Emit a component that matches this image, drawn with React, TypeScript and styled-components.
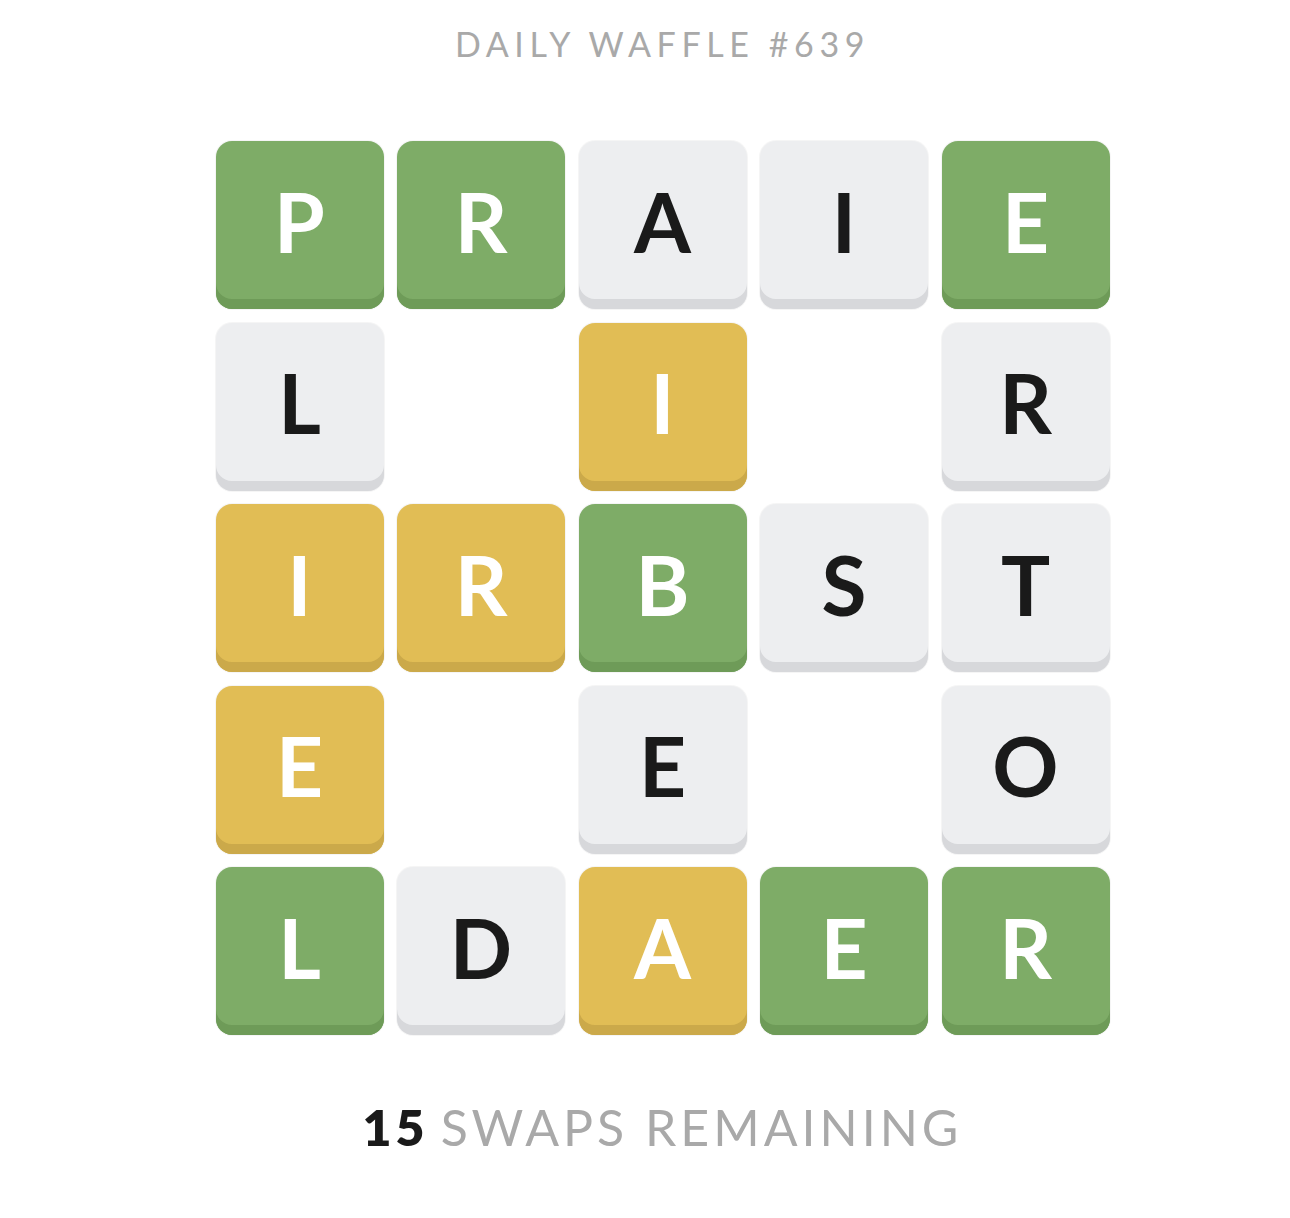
import styled, { createGlobalStyle } from 'styled-components';

const GlobalStyle = createGlobalStyle`
  html, body {
    margin: 0;
    padding: 0;
    background: #ffffff;
  }
  body {
    font-family: "Lato", "Open Sans", sans-serif;
  }
`;

type TileColor = 'green' | 'yellow' | 'white';

const palette: Record<TileColor, { face: string; edge: string; text: string }> = {
  green: { face: '#7eac67', edge: '#6e9b58', text: '#ffffff' },
  yellow: { face: '#e1bd55', edge: '#cba94a', text: '#ffffff' },
  white: { face: '#edeef0', edge: '#d7d8db', text: '#1a1a1a' },
};

const Page = styled.div`
  width: 1290px;
  height: 1218px;
  box-sizing: border-box;
  padding: 24px 0 0 35px;
  display: flex;
  flex-direction: column;
  align-items: center;
`;

const Title = styled.h1`
  margin: 0;
  font-family: "Lato", sans-serif;
  font-weight: 400;
  font-size: 34px;
  line-height: 40px;
  letter-spacing: 5.6px;
  color: #a9a9a9;
  text-transform: uppercase;
`;

const Board = styled.div`
  margin-top: 77px;
  display: grid;
  grid-template-columns: repeat(5, 168px);
  grid-auto-rows: 168px;
  column-gap: 13.5px;
  row-gap: 13.5px;
`;

const Tile = styled.div<{ $color: TileColor }>`
  border-radius: 16px;
  background: ${(p) => palette[p.$color].face};
  box-shadow: inset 0 -10px 0 ${(p) => palette[p.$color].edge}, 0 0 0 1px rgba(0, 0, 0, 0.04);
  color: ${(p) => palette[p.$color].text};
  display: flex;
  align-items: center;
  justify-content: center;
  padding-bottom: 9px;
  box-sizing: border-box;
  font-family: "Lato", sans-serif;
  font-weight: 700;
  font-size: 82px;
  line-height: 1;
`;

const Gap = styled.div``;

const Footer = styled.div`
  margin-top: 62px;
  font-family: "Lato", sans-serif;
  font-size: 50px;
  line-height: 60px;
  letter-spacing: 4px;
  color: #a9a9a9;
  text-transform: uppercase;
`;

const Count = styled.span`
  color: #1a1a1a;
  font-weight: 800;
  margin-right: 12px;
`;

const board: Array<[string, TileColor] | null> = [
  ['P', 'green'], ['R', 'green'], ['A', 'white'], ['I', 'white'], ['E', 'green'],
  ['L', 'white'], null, ['I', 'yellow'], null, ['R', 'white'],
  ['I', 'yellow'], ['R', 'yellow'], ['B', 'green'], ['S', 'white'], ['T', 'white'],
  ['E', 'yellow'], null, ['E', 'white'], null, ['O', 'white'],
  ['L', 'green'], ['D', 'white'], ['A', 'yellow'], ['E', 'green'], ['R', 'green'],
];

export default function App() {
  return (
    <>
      <GlobalStyle />
      <Page>
        <Title>Daily Waffle #639</Title>
        <Board>
          {board.map((cell, i) =>
            cell ? (
              <Tile key={i} $color={cell[1]}>
                {cell[0]}
              </Tile>
            ) : (
              <Gap key={i} />
            )
          )}
        </Board>
        <Footer>
          <Count>15</Count>Swaps remaining
        </Footer>
      </Page>
    </>
  );
}
